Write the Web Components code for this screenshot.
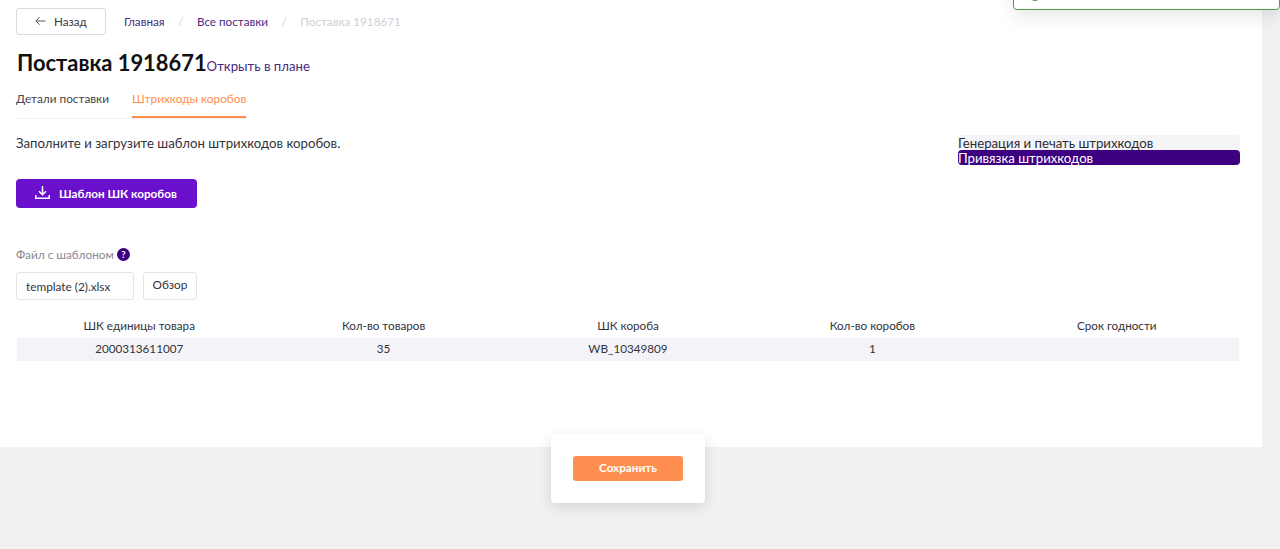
<!DOCTYPE html>
<html lang="ru">
<head>
<meta charset="utf-8">
<title>Поставка 1918671</title>
<style>
  html, body { margin: 0; padding: 0; height: 100%; overflow: hidden; }
  body { background: #f1f1f1; font-family: Lato, "Noto Sans", sans-serif; color: #2b2b33; }
</style>
</head>
<body>
<supply-page>
  <top-bar slot="top"></top-bar>
  <page-title slot="title" heading="Поставка 1918671" link="Открыть в плане"></page-title>
  <tab-strip slot="tabs"></tab-strip>
  <barcode-mode slot="mode"></barcode-mode>
  <template-form slot="form"></template-form>
  <barcode-table slot="table"></barcode-table>
</supply-page>
<toast-box></toast-box>
<save-card></save-card>

<script>
class SupplyPage extends HTMLElement {
  constructor() {
    super();
    this.shadowDOM = this.attachShadow({ mode: 'open' });
    this.shadowDOM.innerHTML = `
      <style>
        :host { display: block; width: 1262px; height: 447px; background: #fff; box-sizing: border-box; padding: 8px 22px 0 16px; }
        .row { display: flex; justify-content: space-between; align-items: flex-start; margin-top: 16px; }
      </style>
      <slot name="top"></slot>
      <slot name="title"></slot>
      <slot name="tabs"></slot>
      <div class="row">
        <slot name="form"></slot>
        <slot name="mode"></slot>
      </div>
      <slot name="table"></slot>
    `;
  }
}

class TopBar extends HTMLElement {
  constructor() {
    super();
    this.shadowDOM = this.attachShadow({ mode: 'open' });
    this.shadowDOM.innerHTML = `
      <style>
        :host { display: flex; align-items: center; height: 27px; font-size: 11.7px; }
        .back { display: flex; align-items: center; box-sizing: border-box; width: 90px; height: 27px; padding: 0 0 2px 18px; border: 1px solid #d9d9de; border-radius: 3px; color: #3a3a44; }
        .back svg { margin-right: 8px; }
        a { color: #4a2a80; }
        .crumbs { display: flex; margin: 0 0 2px 18px; }
        .sep { color: #d5d5da; margin: 0 13.5px; }
        .off { color: #cfcfd4; }
      </style>
      <div class="back">
        <svg width="11" height="10" viewBox="0 0 11 10" fill="none" stroke="#55555e" stroke-width="1"><path d="M10.5 5H1M4.6 1.2 .9 5l3.7 3.8"/></svg>
        Назад
      </div>
      <div class="crumbs">
        <a>Главная</a><span class="sep">/</span>
        <a>Все поставки</a><span class="sep">/</span>
        <span class="off">Поставка 1918671</span>
      </div>
    `;
  }
}

class PageTitle extends HTMLElement {
  constructor() {
    super();
    this.shadowDOM = this.attachShadow({ mode: 'open' });
  }

  connectedCallback() {
    this.shadowDOM.innerHTML = `
      <style>
        :host { display: flex; align-items: baseline; margin-top: 13px; padding-left: 1px; height: 30px; }
        h1 { margin: 0; font-size: 21.9px; line-height: 30px; font-weight: 700; color: #111; }
        a { font-size: 13.2px; color: #4a2a80; }
      </style>
      <h1>${this.getAttribute('heading')}</h1>
      <a>${this.getAttribute('link')}</a>
    `;
  }
}

class TabStrip extends HTMLElement {
  constructor() {
    super();
    this.shadowDOM = this.attachShadow({ mode: 'open' });
    this.shadowDOM.innerHTML = `
      <style>
        :host { display: flex; gap: 23px; width: 230px; margin-top: 10px; height: 30px; border-bottom: 1px solid #efeff2; font-size: 11.8px; white-space: nowrap; }
        span { box-sizing: border-box; height: 30px; padding-top: 3px; color: #44444c; }
        .on { color: #ff8f50; border-bottom: 2px solid #ff8f50; }
      </style>
      <span>Детали поставки</span>
      <span class="on">Штрихкоды коробов</span>
    `;
  }
}

class BarcodeMode extends HTMLElement {
  constructor() {
    super();
    this.shadowDOM = this.attachShadow({ mode: 'open' });
    this.shadowDOM.innerHTML = `
      <style>
        :host { display: block; width: 282px; font-size: 13.2px; line-height: 17px; background: #f5f5f8; border-radius: 4px; }
        div { height: 15px; white-space: nowrap; }
        .on { background: #3d0080; color: #fff; border-radius: 4px; }
      </style>
      <div>Генерация и печать штрихкодов</div>
      <div class="on">Привязка штрихкодов</div>
    `;
  }
}

class TemplateForm extends HTMLElement {
  constructor() {
    super();
    this.shadowDOM = this.attachShadow({ mode: 'open' });
    this.shadowDOM.innerHTML = `
      <style>
        :host { display: block; font-size: 13px; }
        p { margin: 0; font-size: 13.2px; line-height: 17px; color: #33333b; }
        .download { display: flex; align-items: center; box-sizing: border-box; width: 181px; height: 29px; margin-top: 27px; padding: 0 0 2px 19px; background: #6a0fcc; border-radius: 4px; color: #fff; font-size: 11.7px; font-weight: 700; }
        .download svg { margin-right: 9px; }
        .label { display: flex; align-items: center; margin-top: 39px; height: 15px; font-size: 11.8px; color: #8a8a92; }
        .label svg { margin-left: 3px; }
        .file { display: flex; gap: 9px; margin-top: 10px; }
        .box { box-sizing: border-box; height: 28px; border: 1px solid #e3e3e8; border-radius: 3px; font-size: 11.8px; color: #33333b; display: flex; align-items: center; }
        .name { width: 118px; padding-left: 9px; }
        .browse { width: 54px; justify-content: center; padding-bottom: 3px; }
      </style>
      <p>Заполните и загрузите шаблон штрихкодов коробов.</p>
      <div class="download">
        <svg width="15" height="15" viewBox="0 0 15 15" fill="none" stroke="#fff" stroke-width="1.5"><path d="M7.5 1v8.5M4 6.2l3.5 3.5L11 6.2M.8 10v3.2h13.4V10"/></svg>
        Шаблон ШК коробов
      </div>
      <div class="label">Файл с шаблоном
        <svg width="13" height="13" viewBox="0 0 13 13"><circle cx="6.5" cy="6.5" r="6.5" fill="#3d0080"/><text x="6.5" y="10" text-anchor="middle" font-size="9.5" font-weight="700" fill="#fff" font-family="Lato, sans-serif">?</text></svg>
      </div>
      <div class="file">
        <div class="box name">template (2).xlsx</div>
        <div class="box browse">Обзор</div>
      </div>
    `;
  }
}

class BarcodeTable extends HTMLElement {
  constructor() {
    super();
    this.shadowDOM = this.attachShadow({ mode: 'open' });
    this.shadowDOM.innerHTML = `
      <style>
        :host { display: block; margin: 20px 1px 0 1px; font-size: 11.7px; color: #33333b; }
        .tr { display: grid; grid-template-columns: repeat(5, 1fr); text-align: center; }
        .head { height: 18px; line-height: 11px; }
        .body { height: 23px; line-height: 21px; background: #f3f3f8; }
      </style>
      <div class="tr head">
        <span>ШК единицы товара</span><span>Кол-во товаров</span><span>ШК короба</span><span>Кол-во коробов</span><span>Срок годности</span>
      </div>
      <div class="tr body">
        <span>2000313611007</span><span>35</span><span>WB_10349809</span><span>1</span><span></span>
      </div>
    `;
  }
}

class ToastBox extends HTMLElement {
  constructor() {
    super();
    this.shadowDOM = this.attachShadow({ mode: 'open' });
    this.shadowDOM.innerHTML = `
      <style>
        :host { position: absolute; top: -20px; left: 1013px; width: 267px; height: 30px; box-sizing: border-box; background: #fff; border: 1px solid #4f9f4f; border-radius: 4px; box-shadow: 0 6px 18px rgba(0,0,0,.1); }
        i { position: absolute; left: 15px; top: 8px; width: 12px; height: 12px; border-radius: 50%; background: #4f9f4f; }
      </style>
      <i></i>
    `;
  }
}

class SaveCard extends HTMLElement {
  constructor() {
    super();
    this.shadowDOM = this.attachShadow({ mode: 'open' });
    this.shadowDOM.innerHTML = `
      <style>
        :host { position: absolute; left: 551px; top: 434px; width: 154px; height: 69px; display: flex; align-items: center; justify-content: center; background: #fff; border-radius: 3px; box-shadow: 0 4px 14px rgba(0,0,0,.12); }
        button { width: 110px; height: 25px; padding: 0 0 4px; border: 0; border-radius: 3px; background: #ff8f50; color: #fff; font: 700 11.7px Lato, sans-serif; }
      </style>
      <button>Сохранить</button>
    `;
  }
}

customElements.define('supply-page', SupplyPage);
customElements.define('top-bar', TopBar);
customElements.define('page-title', PageTitle);
customElements.define('tab-strip', TabStrip);
customElements.define('barcode-mode', BarcodeMode);
customElements.define('template-form', TemplateForm);
customElements.define('barcode-table', BarcodeTable);
customElements.define('toast-box', ToastBox);
customElements.define('save-card', SaveCard);
</script>
</body>
</html>
